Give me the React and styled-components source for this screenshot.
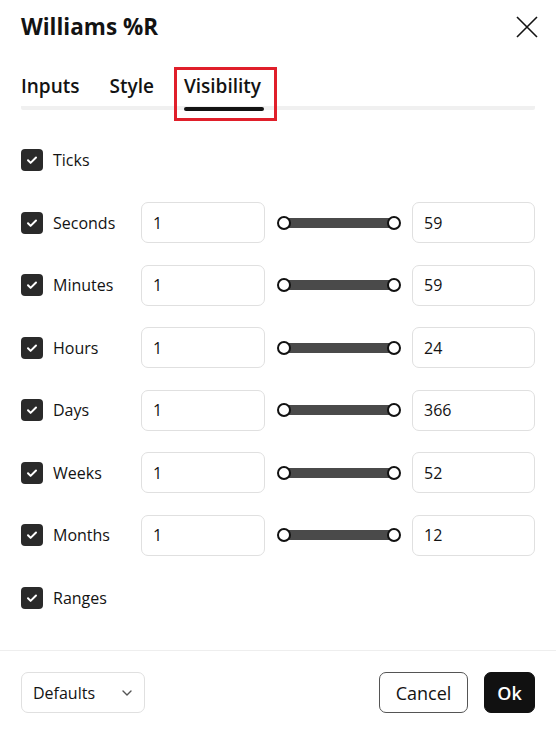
import React from "react";
import styled, { createGlobalStyle } from "styled-components";

const GlobalStyle = createGlobalStyle`
  html, body {
    margin: 0;
    padding: 0;
    background: #fff;
  }
  body {
    font-family: "Open Sans", "Noto Sans", sans-serif;
    color: #131722;
  }
  * {
    box-sizing: border-box;
  }
`;

const Dialog = styled.div`
  width: 556px;
  height: 731px;
  background: #fff;
  display: flex;
  flex-direction: column;
`;

const Header = styled.div`
  display: flex;
  align-items: center;
  justify-content: space-between;
  padding: 12px 21px 0 21px;
  height: 42px;
`;

const Title = styled.h2`
  margin: 0;
  font-size: 22.5px;
  font-weight: 700;
  line-height: 30px;
  color: #131313;
`;

const CloseButton = styled.button`
  border: none;
  background: none;
  padding: 0;
  width: 24px;
  height: 24px;
  margin-right: -4px;
  display: flex;
  align-items: center;
  justify-content: center;
  color: #131313;
`;

const TabList = styled.div`
  margin: 31px 21px 0;
  display: flex;
  gap: 30px;
  border-bottom: 4px solid #f0f0f0;
  border-radius: 2px;
`;

const Tab = styled.div`
  position: relative;
  font-size: 19px;
  font-weight: 600;
  line-height: 26px;
  padding-bottom: 7px;
  color: #131313;

  ${(p) =>
    p.$active &&
    `
    &::after {
      content: "";
      position: absolute;
      left: 0;
      right: -3px;
      bottom: -5px;
      height: 4px;
      border-radius: 2px;
      background: #131313;
    }
  `}
`;

const Highlight = styled.span`
  position: absolute;
  left: -10px;
  right: -16px;
  top: -6px;
  bottom: -15px;
  border: 3px solid #e01f2a;
  pointer-events: none;
`;

const List = styled.div`
  padding: 29.5px 21px 0;
  display: flex;
  flex-direction: column;
  gap: 21.5px;
`;

const Row = styled.div`
  display: grid;
  grid-template-columns: 120px 124px 147px 123px;
  align-items: center;
  height: 41px;
`;

const CheckLabel = styled.label`
  display: flex;
  align-items: center;
  gap: 10px;
  font-size: 16px;
  color: #131313;
`;

const Box = styled.span`
  width: 22px;
  height: 22px;
  border-radius: 4px;
  background: #2a2a2a;
  display: flex;
  align-items: center;
  justify-content: center;
`;

const Field = styled.div`
  height: 41px;
  border: 1px solid #e0e0e0;
  border-radius: 7px;
  display: flex;
  align-items: center;
  padding-left: 11px;
  font-size: 16px;
  color: #131313;
`;

const Slider = styled.div`
  padding: 0 18px 0 19px;
  display: flex;
  align-items: center;
`;

const Track = styled.div`
  position: relative;
  flex: 1;
  height: 10px;
  background: #4a4a4a;
`;

const Thumb = styled.span`
  position: absolute;
  top: 50%;
  ${(p) => (p.$end ? "right: -7px;" : "left: -7px;")}
  width: 14px;
  height: 14px;
  margin-top: -7px;
  border-radius: 50%;
  background: #fff;
  border: 2px solid #111;
`;

const Footer = styled.div`
  margin-top: auto;
  border-top: 1px solid #eeeeee;
  padding: 21px 21px 18px;
  display: flex;
  align-items: center;
  gap: 16px;
`;

const Select = styled.div`
  width: 124px;
  height: 41px;
  border: 1px solid #e0e0e0;
  border-radius: 7px;
  display: flex;
  align-items: center;
  justify-content: space-between;
  padding: 0 10px 0 11px;
  font-size: 16px;
  color: #131313;
  margin-right: auto;
`;

const Button = styled.button`
  height: 41px;
  padding: 0 12px;
  border-radius: 7px;
  font-family: inherit;
  font-size: 18px;
  border: 1px solid ${(p) => (p.$primary ? "#111" : "#555")};
  background: ${(p) => (p.$primary ? "#111" : "#fff")};
  color: ${(p) => (p.$primary ? "#fff" : "#131313")};
  min-width: ${(p) => (p.$primary ? "51px" : "89px")};
  font-weight: ${(p) => (p.$primary ? 600 : 500)};
`;

const CheckIcon = () => (
  <svg width="14" height="14" viewBox="0 0 14 14" fill="none">
    <path
      d="M3 7.3l2.6 2.6L11 4.5"
      stroke="#fff"
      strokeWidth="2"
      strokeLinecap="round"
      strokeLinejoin="round"
    />
  </svg>
);

const Check = ({ label }) => (
  <CheckLabel>
    <Box>
      <CheckIcon />
    </Box>
    {label}
  </CheckLabel>
);

const rows = [
  { label: "Seconds", max: 59 },
  { label: "Minutes", max: 59 },
  { label: "Hours", max: 24 },
  { label: "Days", max: 366 },
  { label: "Weeks", max: 52 },
  { label: "Months", max: 12 },
];

export default function App() {
  return (
    <Dialog>
      <GlobalStyle />
      <Header>
        <Title>Williams %R</Title>
        <CloseButton>
          <svg width="22" height="22" viewBox="0 0 22 22">
            <path
              d="M1 1L21 21M21 1L1 21"
              stroke="#131313"
              strokeWidth="1.6"
            />
          </svg>
        </CloseButton>
      </Header>

      <TabList>
        <Tab>Inputs</Tab>
        <Tab>Style</Tab>
        <Tab $active>
          Visibility
          <Highlight />
        </Tab>
      </TabList>

      <List>
        <Row>
          <Check label="Ticks" />
        </Row>
        {rows.map((r) => (
          <Row key={r.label}>
            <Check label={r.label} />
            <Field>1</Field>
            <Slider>
              <Track>
                <Thumb />
                <Thumb $end />
              </Track>
            </Slider>
            <Field>{r.max}</Field>
          </Row>
        ))}
        <Row>
          <Check label="Ranges" />
        </Row>
      </List>

      <Footer>
        <Select>
          Defaults
          <svg width="14" height="14" viewBox="0 0 14 14" fill="none">
            <path
              d="M3 5l4 4 4-4"
              stroke="#555"
              strokeWidth="1.4"
              strokeLinecap="round"
              strokeLinejoin="round"
            />
          </svg>
        </Select>
        <Button>Cancel</Button>
        <Button $primary>Ok</Button>
      </Footer>
    </Dialog>
  );
}
